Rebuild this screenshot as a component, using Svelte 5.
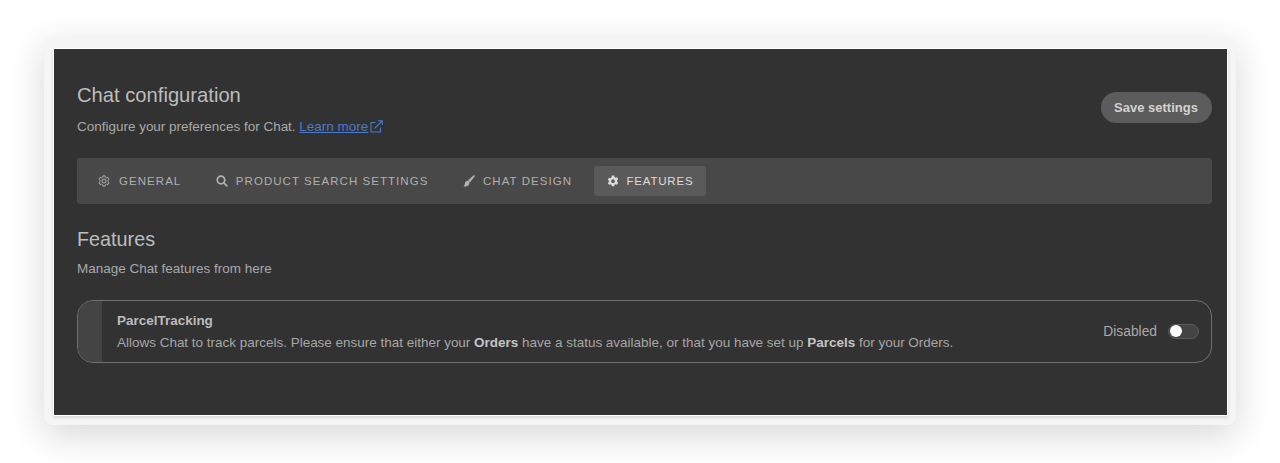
<script>
  const tabs = [
    { id: 'general', label: 'GENERAL' },
    { id: 'search', label: 'PRODUCT SEARCH SETTINGS' },
    { id: 'design', label: 'CHAT DESIGN' },
    { id: 'features', label: 'FEATURES' }
  ];
  let active = $state('features');
  let enabled = $state(false);
</script>

<div class="page">
  <div class="frame">
    <div class="panel">
      <header class="top">
        <div>
          <h1>Chat configuration</h1>
          <p class="sub">
            Configure your preferences for Chat.
            <a href="#learn">Learn more<svg class="ext" viewBox="0 0 13 13" width="13" height="13" fill="none" stroke="currentColor" stroke-width="1.1"><path d="M5.500 2.500H1v9.500h9.500V7.500" /><path d="M4.500 8.500 12 1M8 .8h4.200V5" /></svg></a>
          </p>
        </div>
        <button class="save">Save settings</button>
      </header>

      <nav class="tabs">
        {#each tabs as tab}
          <button class="tab" class:active={active === tab.id} onclick={() => (active = tab.id)}>
            {#if tab.id === 'general'}
              <svg viewBox="0 0 12 12" width="12" height="12" fill="none" stroke="currentColor" stroke-width="1"><path d="M5 .8h2l.4 1.400 1.200.7 1.400-.4 1 1.700-1 1.100v1.400l1 1.100-1 1.700-1.400-.4-1.200.7-.4 1.400H5l-.4-1.400-1.200-.7-1.400.4-1-1.700 1-1.100V5.300l-1-1.100 1-1.700 1.400.4 1.200-.7z" /><circle cx="6" cy="6" r="2" /></svg>
            {:else if tab.id === 'search'}
              <svg viewBox="0 0 12 12" width="12" height="12" fill="none" stroke="currentColor" stroke-width="1.700"><circle cx="5" cy="5" r="3.800" /><path d="M7.800 7.800 11.300 11.300" /></svg>
            {:else if tab.id === 'design'}
              <svg viewBox="0 0 12 12" width="12" height="12" fill="currentColor"><path d="M11.600.4c.4.300.4.800 0 1.200L7.100 7.300 5 5.300 10.400.4c.4-.3.900-.3 1.200 0z" /><path d="M4.400 5.800c1.200 0 2.100.9 2.100 2.100 0 2.300-2.500 3.700-6.100 3.700 1.100-.9 1.300-1.800 1.500-3 .2-1.600 1.100-2.800 2.500-2.800z" /></svg>
            {:else}
              <svg viewBox="0 0 12 12" width="12" height="12"><path fill="currentColor" fill-rule="evenodd" d="M4.800.6h2.400l.3 1.500 1.100.6 1.400-.5 1.200 2.100-1.100 1v1.300l1.100 1-1.200 2.100-1.400-.5-1.100.6-.3 1.500H4.800l-.3-1.500-1.100-.6-1.400.5L.8 8.100l1.100-1V5.800L.8 4.800 2 2.700l1.400.5 1.100-.6zM6 4.300a1.900 1.900 0 1 0 0 3.800 1.900 1.900 0 0 0 0-3.800z" /></svg>
            {/if}
            <span>{tab.label}</span>
          </button>
        {/each}
      </nav>

      <h2>Features</h2>
      <p class="sub manage">Manage Chat features from here</p>

      <section class="feature">
        <div class="strip"></div>
        <div class="info">
          <h3>ParcelTracking</h3>
          <p>Allows Chat to track parcels. Please ensure that either your <b>Orders</b> have a status available, or that you have set up <b>Parcels</b> for your Orders.</p>
        </div>
        <div class="state">
          <span>{enabled ? 'Enabled' : 'Disabled'}</span>
          <button class="toggle" class:on={enabled} aria-label="Toggle ParcelTracking" onclick={() => (enabled = !enabled)}><i></i></button>
        </div>
      </section>
    </div>
  </div>
</div>

<style>
  :global(body) {
    background: #fff;
    font-family: "Liberation Sans", Arial, sans-serif;
  }
  .page {
    padding: 37px 44px 38px;
    height: 463px;
    box-sizing: border-box;
  }
  .frame {
    background: #f5f5f5;
    border-radius: 8px;
    padding: 12px 9px 10px 10px;
    height: 388px;
    box-sizing: border-box;
    box-shadow: 0 10px 36px rgba(0, 0, 0, 0.16);
  }
  .panel {
    background: #323232;
    height: 366px;
    box-sizing: border-box;
    padding: 34px 15px 0 23px;
    color: #b4b4b4;
    box-shadow: 0 0 0 1px #fff, 0 2px 3px 1px rgba(0, 0, 0, 0.12);
  }
  .top {
    display: flex;
    justify-content: space-between;
    align-items: flex-start;
    height: 75px;
  }
  h1 {
    margin: 0;
    font-size: 20.200px;
    line-height: 24px;
    font-weight: 400;
    color: #bdbdbd;
  }
  h2 {
    margin: 24px 0 0;
    font-size: 19.800px;
    line-height: 22px;
    font-weight: 400;
    color: #bdbdbd;
  }
  .sub {
    margin: 12px 0 0;
    font-size: 13.480px;
    line-height: 16px;
    color: #a9a9a9;
  }
  .manage {
    margin-top: 11px;
  }
  a {
    color: #4a7bc8;
  }
  .ext {
    vertical-align: -2px;
    margin-left: 2px;
  }
  .save {
    margin-top: 9px;
    width: 111px;
    height: 31px;
    border: 0;
    border-radius: 16px;
    background: #5c5c5c;
    color: #d2d2d2;
    font: 600 13px "Liberation Sans", Arial, sans-serif;
    padding: 0 1px 0 0;
  }
  .tabs {
    display: flex;
    align-items: center;
    gap: 8.500px;
    height: 46px;
    background: #484848;
    border-radius: 3px;
    padding-left: 8px;
  }
  .tab {
    display: flex;
    align-items: center;
    gap: 8px;
    height: 30px;
    padding: 0 13px;
    border: 0;
    border-radius: 3px;
    background: none;
    color: #b0b0b0;
    font: 400 11.500px "Liberation Sans", Arial, sans-serif;
    letter-spacing: 1.050px;
  }
  .tab:first-child {
    gap: 9px;
  }
  .tab.active {
    background: #5a5a5a;
    color: #dcdcdc;
    letter-spacing: 0.800px;
  }
  .feature {
    display: flex;
    align-items: center;
    height: 63px;
    margin-top: 23px;
    box-sizing: border-box;
    border: 1px solid #707070;
    border-radius: 16px;
    overflow: hidden;
  }
  .strip {
    width: 24px;
    align-self: stretch;
    background: #444;
  }
  .info {
    flex: 1;
    padding-left: 15px;
  }
  h3 {
    margin: 0;
    font-size: 13.480px;
    line-height: 16px;
    font-weight: 700;
    color: #bcbcbc;
  }
  .info p {
    margin: 6px 0 0;
    font-size: 13.480px;
    line-height: 16px;
    color: #a6a6a6;
  }
  .info b {
    color: #c4c4c4;
  }
  .state {
    display: flex;
    align-items: center;
    gap: 11px;
    padding-right: 12px;
    font-size: 13.800px;
    color: #a9a9a9;
  }
  .toggle {
    position: relative;
    width: 31px;
    height: 15px;
    margin-bottom: 1px;
    padding: 0;
    border: 1px solid #5c5c5c;
    border-radius: 8px;
    background: #444;
  }
  .toggle i {
    position: absolute;
    left: 1px;
    top: 0.500px;
    width: 12px;
    height: 12px;
    border-radius: 50%;
    background: #fff;
  }
  .toggle.on i {
    left: 16px;
  }
</style>
